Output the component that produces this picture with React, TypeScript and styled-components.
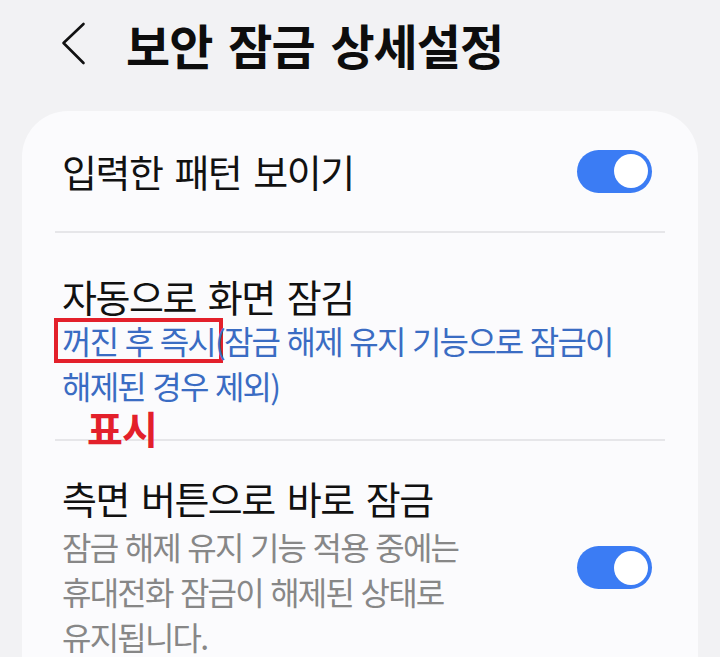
import styled, { createGlobalStyle } from 'styled-components';

const GlobalStyle = createGlobalStyle`
  html, body {
    margin: 0;
    padding: 0;
    overflow: hidden;
    background: #f2f2f4;
  }

  body {
    font-family: "Noto Sans CJK KR", "Noto Sans", sans-serif;
    color: #111111;
  }
`;

const Screen = styled.div`
  width: 720px;
  min-height: 657px;
  background: #f2f2f4;
`;

const Header = styled.header`
  display: flex;
  align-items: center;
  gap: 39px;
  height: 88px;
  padding-left: 61px;
  margin-bottom: 23px;
`;

const BackButton = styled.button`
  display: flex;
  padding: 0;
  border: none;
  background: none;
  cursor: pointer;
`;

const Title = styled.h1`
  margin: 0;
  font-size: 48px;
  font-weight: 700;
  letter-spacing: -1px;
  word-spacing: 6px;
  line-height: 48px;
  color: #0d0d0d;
`;

const Card = styled.section`
  margin: 0 22px;
  padding-bottom: 40px;
  background: #fbfbfd;
  border-radius: 46px 46px 0 0;
`;

const Row = styled.div<{ $top: number; $bottom: number }>`
  position: relative;
  display: flex;
  align-items: center;
  gap: 24px;
  padding: ${(p) => p.$top}px 46px ${(p) => p.$bottom}px 40px;
`;

const TextBlock = styled.div`
  flex: 1;
  min-width: 0;
`;

const RowTitle = styled.div`
  font-size: 38px;
  line-height: 44px;
  letter-spacing: -1.5px;
  word-spacing: 5px;
  color: #111111;
`;

const Summary = styled.div<{ $tone: 'blue' | 'gray' }>`
  font-size: 32px;
  line-height: 45px;
  letter-spacing: -1.8px;
  word-spacing: 2px;
  color: ${(p) => (p.$tone === 'blue' ? '#3a6cc3' : '#878787')};
  margin-top: ${(p) => (p.$tone === 'blue' ? 0 : 4)}px;
`;

/* red frame drawn around the current value */
const Highlight = styled.span`
  display: inline-block;
  line-height: 35px;
  padding: 0 3px;
  margin: 0 -3px;
  box-shadow: 0 0 0 1px #fbfbfd, 0 0 0 5px #e3202b;
`;

const Note = styled.span`
  position: absolute;
  left: 65px;
  top: 175px;
  font-size: 39px;
  font-weight: 700;
  line-height: 1;
  letter-spacing: -1px;
  color: #e3202b;
`;

const Divider = styled.hr`
  margin: 0 33px;
  height: 2px;
  border: none;
  background: #e6e6e9;
`;

const Toggle = styled.span<{ $on: boolean }>`
  flex-shrink: 0;
  display: flex;
  align-items: center;
  justify-content: ${(p) => (p.$on ? 'flex-end' : 'flex-start')};
  width: 75px;
  height: 43px;
  padding: 0 4px;
  box-sizing: border-box;
  border-radius: 22px;
  background: ${(p) => (p.$on ? '#3b7cf4' : '#c7c7cc')};
`;

const Knob = styled.span`
  width: 34px;
  height: 34px;
  border-radius: 50%;
  background: #ffffff;
`;

const App = () => {
  return (
    <Screen>
      <GlobalStyle />
      <Header>
        <BackButton aria-label="뒤로">
          <svg width="26" height="44" viewBox="0 0 26 44" fill="none">
            <polyline
              points="22.5,2 2.5,21 22.5,41"
              stroke="#111111"
              strokeWidth="2.6"
              strokeLinecap="round"
              strokeLinejoin="round"
            />
          </svg>
        </BackButton>
        <Title>보안 잠금 상세설정</Title>
      </Header>

      <Card>
        <Row $top={38} $bottom={38}>
          <TextBlock>
            <RowTitle>입력한 패턴 보이기</RowTitle>
          </TextBlock>
          <Toggle $on>
            <Knob />
          </Toggle>
        </Row>

        <Divider />

        <Row $top={41} $bottom={31}>
          <TextBlock>
            <RowTitle>자동으로 화면 잠김</RowTitle>
            <Summary $tone="blue">
              <Highlight>꺼진 후 즉시</Highlight>(잠금 해제 유지 기능으로 잠금이
              <br />
              해제된 경우 제외)
            </Summary>
          </TextBlock>
          <Note>표시</Note>
        </Row>

        <Divider />

        <Row $top={35} $bottom={20}>
          <TextBlock>
            <RowTitle>측면 버튼으로 바로 잠금</RowTitle>
            <Summary $tone="gray">
              잠금 해제 유지 기능 적용 중에는
              <br />
              휴대전화 잠금이 해제된 상태로
              <br />
              유지됩니다.
            </Summary>
          </TextBlock>
          <Toggle $on>
            <Knob />
          </Toggle>
        </Row>
      </Card>
    </Screen>
  );
};

export default App;
